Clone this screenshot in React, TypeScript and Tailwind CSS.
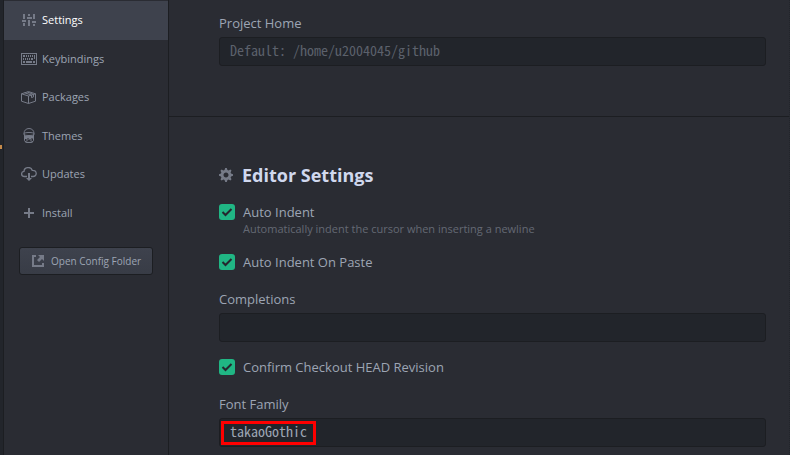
import type { ReactNode } from "react";

const icons: Record<string, ReactNode> = {
  settings: (
    <path d="M1 0h2v5H1zM0 6h4v2H0zM1 9h2v3H1zM6 0h2v2H6zM5 3h5v2H5zM6 6h2v6H6zM11 0h2v5h-2zM10 7h4v2h-4zM11 10h2v2h-2z" />
  ),
  keyboard: (
    <path
      fillRule="evenodd"
      d="M0 0h16v12H0zM1 1v10h14V1zM2 2h2v2H2zM5 2h1v2H5zM7 2h1v2H7zM9 2h1v2H9zM11 2h1v2h-1zM13 2h1v4h-1zM2 5h1v2H2zM4 5h1v2H4zM6 5h1v2H6zM8 5h1v2H8zM10 5h2v2h-2zM2 8h2v2H2zM5 8h6v2H5zM12 8h2v2h-2z"
    />
  ),
  package: (
    <g fill="none" stroke="currentColor" strokeWidth="1">
      <path d="M.5 2.8 7.5 .6l7 2.2v7.4l-7 2.3-7-2.3zM.5 2.8l7 2.2 7-2.2M7.5 5v7.5M3.5 1.8l7 2.2v2.6l2-.7V3.4l-6-2.3" />
    </g>
  ),
  paintcan: (
    <g>
      <path fill="none" stroke="currentColor" d="M1 5.500C1 2.500 3 .5 6 .5s5 2 5 5" />
      <path fill="none" stroke="currentColor" d="M.5 6C.5 4 11.500 4 11.500 6S.5 8 .5 6zM1.500 6.500v6c0 2.600 9 2.600 9 0v-6" />
      <path d="M1 7c2 1.300 8 1.300 10 0v4H9.500v-1h-1v3h-1v-2h-1v1h-1v-2h-1v3h-1v-2H1z" />
      <path d="M2 13c2 1.500 6 1.500 8 0v1c-2 1.300-6 1.300-8 0z" />
    </g>
  ),
  cloud: (
    <g>
      <path fill="none" stroke="currentColor" strokeWidth="1.300" d="M6 9.500H3.500C-.3 9.500-.2 4.600 3 4.300 3.300-.2 10-.8 11.200 3.300c5.200-.4 5.200 6.200.8 6.200h-2" />
      <path d="M7 6h2v5h2l-3 3-3-3h2z" />
    </g>
  ),
  plus: <path d="M4 0h2v4h4v2H6v4H4V6H0V4h4z" />,
  external: (
    <path d="M0 0h4v2H2v8h8V8h2v4H0zM6 0h6v6l-2-2-3 3-2-2 3-3z" />
  ),
  gear: (
    <path
      fillRule="evenodd"
      d="M14 7.770v-1.600l-1.940-.640-.450-1.090.880-1.840-1.130-1.130-1.810.910-1.090-.450L7.770 0h-1.600l-.630 1.950-1.110.450-1.840-.880-1.130 1.130.910 1.810-.450 1.090L0 6.230v1.590l1.940.640.450 1.090-.880 1.840 1.130 1.130 1.810-.910 1.090.450.690 1.940h1.590l.630-1.950 1.110-.450 1.840.880 1.130-1.130-.920-1.810.470-1.090zM7 9.500c-1.400 0-2.500-1.100-2.500-2.500S5.600 4.500 7 4.500s2.500 1.100 2.500 2.500S8.400 9.500 7 9.500z"
    />
  ),
};

function Icon({ name, width, height }: { name: string; width: number; height: number }) {
  return (
    <svg
      aria-hidden="true"
      width={width}
      height={height}
      viewBox={`0 0 ${width} ${height}`}
      fill="currentColor"
      className="shrink-0 text-[#767b88]"
    >
      {icons[name]}
    </svg>
  );
}

const navItems = [
  { label: "Settings", icon: "settings", width: 14, height: 12 },
  { label: "Keybindings", icon: "keyboard", width: 16, height: 12 },
  { label: "Packages", icon: "package", width: 15, height: 13 },
  { label: "Themes", icon: "paintcan", width: 12, height: 15 },
  { label: "Updates", icon: "cloud", width: 16, height: 14 },
  { label: "Install", icon: "plus", width: 10, height: 10 },
];

function Sidebar() {
  return (
    <aside className="w-[165px] shrink-0 border-r border-[#1c1e22] pt-px">
      <nav className="grid h-[231px] auto-rows-fr">
        {navItems.map((item, i) => (
          <a
            key={item.label}
            href="#"
            aria-current={i === 0 ? "page" : undefined}
            className={
              i === 0
                ? "flex items-center gap-[5px] bg-[#3e424d] pl-4 text-white"
                : "flex items-center gap-[5px] pl-4"
            }
          >
            <span className="flex w-[17px] justify-center">
              <Icon name={item.icon} width={item.width} height={item.height} />
            </span>
            {item.label}
          </a>
        ))}
      </nav>
      <button
        type="button"
        className="mx-[15px] mt-[15px] flex h-7 w-[134px] items-center gap-[7px] rounded-[3px] border border-[#1c1e22] bg-linear-to-b from-[#3e424d] to-[#383c46] pl-3 text-[10px] whitespace-nowrap"
      >
        <Icon name="external" width={12} height={12} />
        Open Config Folder
      </button>
    </aside>
  );
}

const inputClass =
  "block h-[29px] w-full rounded-[3px] border border-[#1c1e22] bg-[#22252b] px-2.5 pb-1 font-['Noto_Sans_Mono_CJK_JP','Liberation_Mono',monospace] text-[14px] text-[#9da5b4] placeholder:text-[#5c616c] outline-none";

function TextField({
  id,
  label,
  value,
  placeholder,
  highlighted,
}: {
  id: string;
  label: string;
  value?: string;
  placeholder?: string;
  highlighted?: boolean;
}) {
  return (
    <div>
      <label htmlFor={id} className="mb-1 block leading-5">
        {label}
      </label>
      <div className="relative">
        <input id={id} type="text" defaultValue={value} placeholder={placeholder} className={inputClass} />
        {highlighted && (
          <div className="pointer-events-none absolute top-[3px] left-[2px] h-6 w-[95px] border-3 border-[#f00]" />
        )}
      </div>
    </div>
  );
}

function CheckField({ id, label, description }: { id: string; label: string; description?: string }) {
  return (
    <div className="pb-[2px]">
      <div className="flex items-center gap-2">
        <span className="grid size-4">
          <input
            id={id}
            type="checkbox"
            defaultChecked
            className="col-start-1 row-start-1 size-4 appearance-none rounded-[3px] bg-[#20b684]"
          />
          <svg
            aria-hidden="true"
            viewBox="0 0 16 16"
            className="pointer-events-none col-start-1 row-start-1 size-4"
          >
            <path d="M3.500 8 6.500 11 12.500 5" fill="none" stroke="#24272e" strokeWidth="2" />
          </svg>
        </span>
        <label htmlFor={id} className="leading-5">
          {label}
        </label>
      </div>
      {description && <p className="pl-6 text-[11px] leading-[13px] text-[#646974]">{description}</p>}
    </div>
  );
}

export default function App() {
  return (
    <div className="flex h-screen overflow-hidden bg-[#2a2c33] font-['Open_Sans','Noto_Sans',sans-serif] text-[#9da5b4]">
      <div className="flex w-1 shrink-0 flex-col overflow-hidden border-r border-[#1c1e22] bg-[#22252b] pt-[145px]">
        <span className="h-1 w-[2px] bg-[#c58a4a]" />
      </div>
      <div className="flex min-w-0 flex-1 text-[11px]">
        <Sidebar />
        <main className="min-w-0 flex-1 border-r border-dotted border-[#22252b] text-[13px]">
          <section className="border-b border-[#1c1e22] pt-[13px] pr-[23px] pb-[50px] pl-[50px]">
            <TextField id="project-home" label="Project Home" placeholder="Default: /home/u2004045/github" />
          </section>
          <section className="pt-[46px] pr-[23px] pl-[50px]">
            <h2 className="flex items-center gap-[9px] text-[18px] leading-6 font-bold text-[#d0d8ee]">
              <Icon name="gear" width={14} height={14} />
              Editor Settings
            </h2>
            <div className="mt-[15px] flex flex-col gap-[15px]">
              <CheckField
                id="auto-indent"
                label="Auto Indent"
                description="Automatically indent the cursor when inserting a newline"
              />
              <CheckField id="auto-indent-paste" label="Auto Indent On Paste" />
              <TextField id="completions" label="Completions" />
              <CheckField id="confirm-checkout" label="Confirm Checkout HEAD Revision" />
              <TextField id="font-family" label="Font Family" value="takaoGothic" highlighted />
            </div>
          </section>
        </main>
      </div>
    </div>
  );
}
